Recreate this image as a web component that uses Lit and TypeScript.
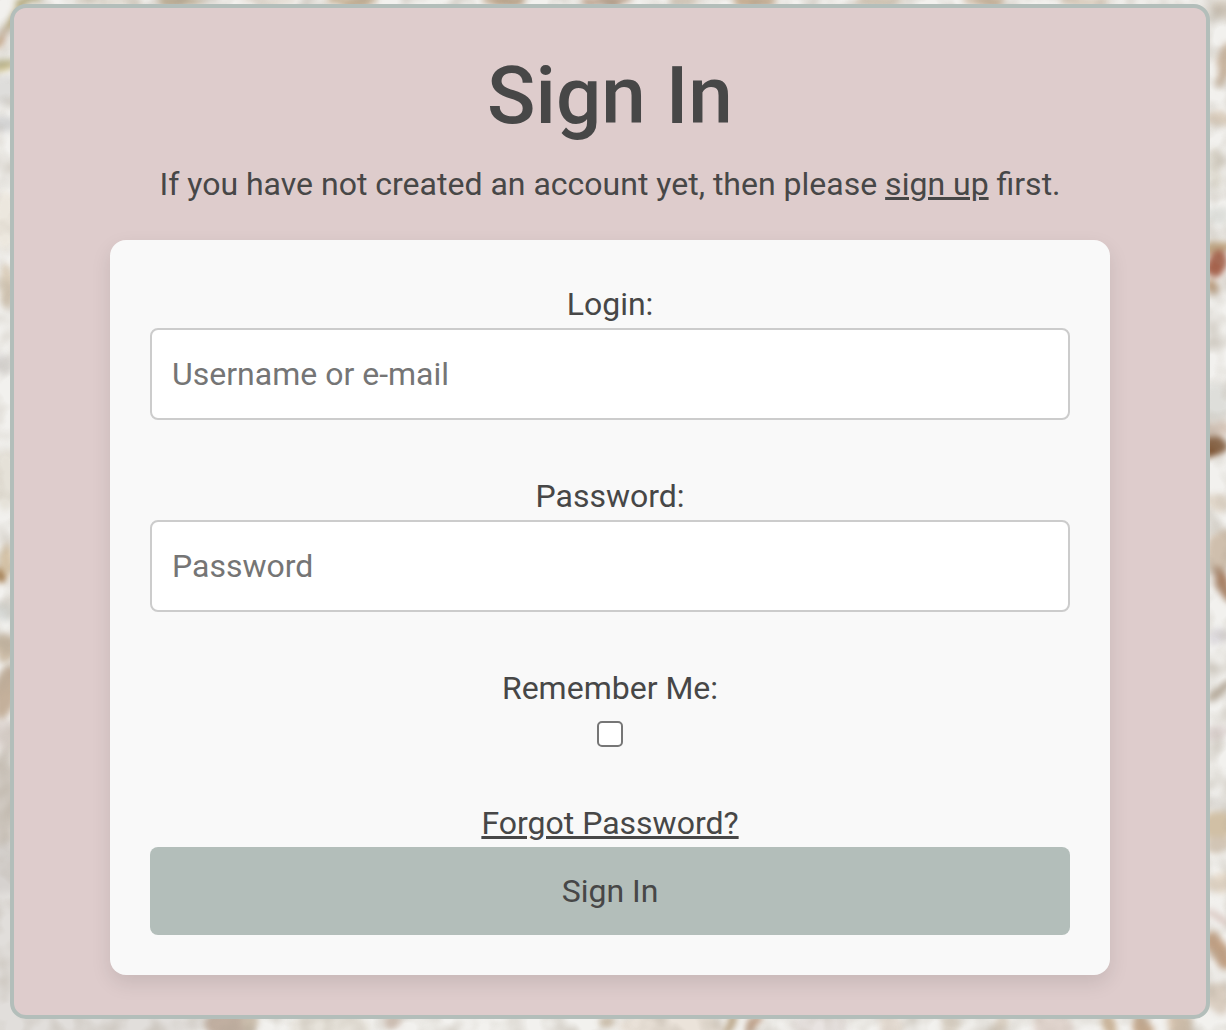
import { LitElement, css, html, svg } from "lit";
import { customElement } from "lit/decorators.js";

/* Soft patches of the backdrop: cx, cy, rx, ry, rotation, colour. */
const patches: [number, number, number, number, number, string][] = [
  // left edge
  [8, 26, 3, 34, 30, "#a99a68"],
  [3, 63, 12, 3, 0, "#b5b184"],
  [3, 68, 12, 2, 0, "#d8c98e"],
  [2, 40, 3, 12, 20, "#cba98f"],
  [4, 90, 12, 16, 0, "#dedddb"],
  [5, 124, 12, 8, 0, "#d3d3d3"],
  [5, 220, 12, 30, 0, "#ece7de"],
  [7, 285, 8, 22, 0, "#ddd0bd"],
  [4, 365, 10, 10, 0, "#e0dfdf"],
  [5, 480, 12, 30, 0, "#e5e1d8"],
  [6, 560, 8, 16, 0, "#d3c1a6"],
  [1, 576, 5, 7, 0, "#a07748"],
  [4, 612, 12, 8, 0, "#d7d9d6"],
  [5, 648, 12, 14, 0, "#cbbba6"],
  [6, 692, 12, 28, 10, "#c4b09b"],
  [4, 735, 14, 16, 0, "#e0d8d4"],
  [3, 800, 14, 50, 0, "#cfc8c0"],
  [4, 870, 14, 30, 0, "#d6d2cf"],
  [5, 970, 18, 80, 0, "#e1dedb"],
  // right edge
  [1224, 8, 12, 10, 0, "#ddd5ca"],
  [1225, 64, 8, 22, 12, "#c9b5a0"],
  [1218, 118, 16, 7, 0, "#dacdbd"],
  [1216, 168, 8, 20, 0, "#dedad0"],
  [1218, 216, 12, 8, 0, "#dddeda"],
  [1218, 248, 16, 6, 0, "#c0a580"],
  [1216, 264, 11, 13, 20, "#a5634d"],
  [1212, 287, 5, 8, 0, "#b99b7d"],
  [1218, 400, 14, 18, 0, "#dededa"],
  [1216, 428, 18, 7, 0, "#d9c9bd"],
  [1213, 447, 13, 12, 0, "#7f5737"],
  [1218, 502, 14, 8, 0, "#ded4c7"],
  [1220, 552, 16, 22, 15, "#cfbfad"],
  [1223, 584, 6, 20, -25, "#a67d60"],
  [1217, 636, 10, 7, 0, "#dcd9dc"],
  [1221, 692, 5, 16, 55, "#b5aa9b"],
  [1217, 732, 14, 8, 0, "#ded5d3"],
  [1219, 805, 18, 7, 0, "#dedbd6"],
  [1218, 826, 18, 14, 0, "#d1c0a5"],
  [1220, 844, 16, 8, 0, "#d2c5b5"],
  [1219, 883, 16, 9, 0, "#e4d8c9"],
  [1218, 917, 16, 4, 20, "#dbcac4"],
  [1219, 950, 9, 20, -35, "#c19f82"],
  [1218, 1000, 12, 16, 0, "#d9cdc0"],
  // top edge
  [28, 1, 14, 4, -15, "#aaa06b"],
  [110, 1, 34, 6, 0, "#dcd6cb"],
  [180, 1, 24, 6, 0, "#b9ab93"],
  [270, 1, 30, 6, 0, "#e4ddd4"],
  [352, 1, 26, 6, 0, "#c5b195"],
  [505, 1, 22, 6, 0, "#b89f83"],
  [606, 1, 26, 6, 0, "#b79b84"],
  [684, 1, 16, 6, 0, "#cfc3b3"],
  [755, 1, 22, 6, 0, "#c3ab8f"],
  [880, 1, 26, 6, 0, "#d1c5b4"],
  [985, 1, 22, 6, 0, "#c7b299"],
  [1085, 1, 26, 6, 0, "#d8cbbb"],
  // bottom edge
  [90, 1025, 120, 18, 0, "#e1dedb"],
  [228, 1024, 22, 14, 0, "#c1afa1"],
  [250, 1024, 9, 14, 0, "#c9bcab"],
  [330, 1026, 40, 16, 0, "#e6e2da"],
  [393, 1022, 8, 8, 30, "#d9c8be"],
  [606, 1022, 7, 5, 0, "#cfc0ab"],
  [670, 1025, 50, 16, 0, "#ebe3da"],
  [729, 1025, 4, 14, 30, "#b8a385"],
  [754, 1025, 5, 14, 35, "#bd9e86"],
  [818, 1026, 30, 14, 0, "#e8e3e1"],
  [890, 1025, 12, 14, 0, "#e5dcd3"],
  [950, 1025, 10, 14, 10, "#d8d0c4"],
  [1000, 1025, 8, 14, 25, "#d8cec1"],
  [1052, 1025, 20, 14, 0, "#e3d7d1"],
  [1108, 1025, 7, 14, -15, "#cdb69b"],
  [1142, 1026, 8, 14, -20, "#c6a98d"],
  [1180, 1026, 12, 14, 0, "#d6c4b0"],
];

@customElement("app-root")
export class AppRoot extends LitElement {
  static styles = css`
    :host {
      display: block;
      position: relative;
      box-sizing: border-box;
      min-height: 100vh;
      padding: 4px 16px 8px 10px;
      overflow: hidden;
      background: #f2f1ee;
      color: #474747;
      font: 400 32px/48px Roboto, "Liberation Sans", sans-serif;
      text-align: center;
    }
    *,
    *::before {
      box-sizing: border-box;
    }
    .backdrop {
      position: absolute;
      inset: 0;
      width: 100%;
      height: 100%;
    }
    .panel {
      position: relative;
      padding: 40px 96px;
      border: 4px solid #b3beba;
      border-radius: 16px;
      background: #decccc;
    }
    .title {
      margin: 0 0 16px;
      font-size: 80px;
      font-weight: 500;
      line-height: 96px;
    }
    .intro {
      margin: 0 0 32px;
    }
    .link {
      color: inherit;
      text-decoration: underline;
    }
    .card {
      display: flex;
      flex-direction: column;
      padding: 40px;
      border-radius: 16px;
      background: #f9f9f9;
      box-shadow: 0 8px 20px rgba(0, 0, 0, 0.1);
    }
    .field {
      display: flex;
      flex-direction: column;
      align-items: center;
      margin-bottom: 52px;
    }
    .text {
      width: 100%;
      height: 92px;
      padding: 20px;
      border: 2px solid #cccccc;
      border-radius: 8px;
      background: #ffffff;
      color: inherit;
      font: inherit;
    }
    .text::placeholder {
      color: #757575;
      opacity: 1;
    }
    .check {
      appearance: none;
      width: 26px;
      height: 26px;
      margin: 9px 0 0;
      border: 2px solid #767676;
      border-radius: 5px;
      background: #ffffff;
    }
    .check:checked {
      background: #474747;
    }
    .forgot {
      align-self: center;
    }
    .submit {
      padding: 20px;
      border: 0;
      border-radius: 8px;
      background: #b3beba;
      color: inherit;
      font: inherit;
      cursor: pointer;
    }
  `;

  render() {
    return html`
      <svg class="backdrop" viewBox="0 0 1226 1030" preserveAspectRatio="none" aria-hidden="true">
        <defs>
          <filter id="soft" x="-5%" y="-5%" width="110%" height="110%" color-interpolation-filters="sRGB">
            <feTurbulence type="fractalNoise" baseFrequency="0.05" numOctaves="2" seed="4" result="noise" />
            <feDisplacementMap in="SourceGraphic" in2="noise" scale="12" xChannelSelector="R" yChannelSelector="G" />
            <feGaussianBlur stdDeviation="3" />
          </filter>
          <filter id="grain" x="0" y="0" width="100%" height="100%" color-interpolation-filters="sRGB">
            <feTurbulence type="fractalNoise" baseFrequency="0.04" numOctaves="2" seed="9" />
            <feColorMatrix
              type="matrix"
              values="0 0 0 0 0.66  0 0 0 0 0.62  0 0 0 0 0.56  1.6 0 0 0 -0.65"
            />
          </filter>
        </defs>
        <g filter="url(#soft)">
          ${patches.map(
            ([cx, cy, rx, ry, angle, fill]) => svg`<ellipse
              cx=${cx} cy=${cy} rx=${rx} ry=${ry} fill=${fill}
              transform="rotate(${angle} ${cx} ${cy})"></ellipse>`
          )}
        </g>
        <rect width="1226" height="1030" filter="url(#grain)" opacity="0.6"></rect>
      </svg>
      <main class="panel">
        <h1 class="title">Sign In</h1>
        <p class="intro">
          If you have not created an account yet, then please
          <a class="link" href="#signup">sign up</a> first.
        </p>
        <form class="card" @submit=${(e: Event) => e.preventDefault()}>
          <div class="field">
            <label for="login">Login:</label>
            <input class="text" id="login" type="text" placeholder="Username or e-mail" />
          </div>
          <div class="field">
            <label for="password">Password:</label>
            <input class="text" id="password" type="password" placeholder="Password" />
          </div>
          <div class="field">
            <label for="remember">Remember Me:</label>
            <input class="check" id="remember" type="checkbox" />
          </div>
          <a class="link forgot" href="#forgot">Forgot Password?</a>
          <button class="submit" type="submit">Sign In</button>
        </form>
      </main>
    `;
  }
}
